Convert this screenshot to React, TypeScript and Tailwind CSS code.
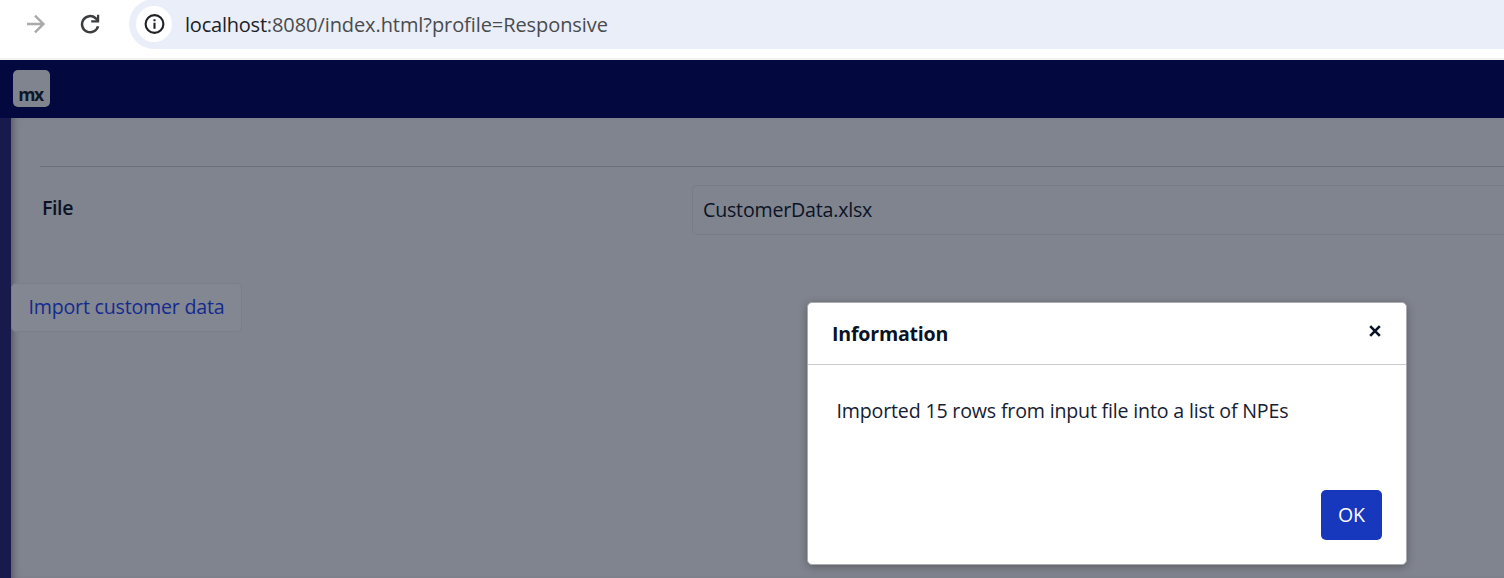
import React from "react";

function BrowserBar() {
  return (
    <div className="flex h-[60px] shrink-0 items-start border-b-2 border-[#f3f3f1] bg-white">
      <div className="flex h-12 w-[129px] shrink-0 items-center pl-[26px]">
        <svg width="20" height="20" viewBox="0 0 20 20" fill="none" stroke="#a9a9a9" strokeWidth="2.4">
          <path d="M1 10H17.3M9 1.6L17.4 10L9 18.4" />
        </svg>
        <svg className="ml-[34px]" width="20" height="20" viewBox="0 0 20 20" fill="none" stroke="#3c3d3f" strokeWidth="2.5">
          <path d="M18 12.2A8.1 8.1 0 1 1 15.6 4.2L17.8 6.4" />
          <path d="M18.1 0.8V7.3H11.2" strokeWidth="2.2" />
        </svg>
      </div>
      <div className="-mt-[1px] flex h-[50px] flex-1 items-center rounded-l-full bg-[#e9eef8] pl-[7px]">
        <div className="flex h-9 w-9 shrink-0 items-center justify-center rounded-full bg-white">
          <svg className="ml-px" width="21" height="20" viewBox="0 0 21 20" fill="none" stroke="#202124" strokeWidth="2.1">
            <circle cx="10.5" cy="10" r="8.9" />
            <path d="M10.5 8.7V14.7M10.5 5.2V7.2" />
          </svg>
        </div>
        <div className="ml-[13px] mt-px whitespace-nowrap font-['Open_Sans',sans-serif] text-[20px] leading-7 tracking-[-0.08px] text-[#4a4b4e]">
          <span className="tracking-[-0.22px] text-[#202124]">localhost</span>:8080/index.html?profile=Responsive
        </div>
      </div>
    </div>
  );
}

function InformationDialog() {
  return (
    <div
      role="dialog"
      className="absolute left-[807px] top-[302px] flex h-[263px] w-[600px] flex-col rounded-[5px] border border-[#a9abb0] bg-white shadow-[0_2px_8px_rgba(0,0,0,0.3)]"
    >
      <div className="flex h-[62px] shrink-0 items-center justify-between border-b border-[#c9cbce] pl-6 pr-[25px]">
        <h4 className="mt-px text-[19.6px] font-bold leading-7 tracking-[-0.22px] text-[#0a1325]">Information</h4>
        <button aria-label="Close" className="-mt-[6px]">
          <svg width="12" height="12" viewBox="0 0 12 12" stroke="#0a1325" strokeWidth="2.6">
            <path d="M1.2 1.2L10.8 10.8M10.8 1.2L1.2 10.8" />
          </svg>
        </button>
      </div>
      <p className="mt-8 whitespace-nowrap pl-[28.5px] text-[19.6px] leading-7 tracking-[-0.175px] text-[#162033]">
        Imported 15 rows from input file into a list of NPEs
      </p>
      <div className="mb-6 mr-6 mt-auto flex justify-end">
        <button className="h-[50px] w-[61px] rounded-[5px] bg-[#1737bd] text-[19.6px] text-white">OK</button>
      </div>
    </div>
  );
}

export default function App() {
  return (
    <div className="relative flex h-[578px] w-[1504px] flex-col overflow-hidden font-['Open_Sans',sans-serif]">
      <BrowserBar />
      <header className="flex h-[58px] shrink-0 bg-[#03083f] pl-[13px] pt-[10px]">
        <div className="flex h-[37px] w-[37px] items-end justify-center rounded-[5px] bg-[#80848f] pb-[3px] pr-[2px] text-[17.5px] font-bold leading-5 tracking-[-1.4px] text-[#0d172b]">
          mx
        </div>
      </header>
      <div className="flex min-h-0 flex-1">
        <aside className="w-[11px] shrink-0 bg-[#171a4a]" />
        <main className="flex min-w-0 flex-1 flex-col items-stretch bg-[#80848e] shadow-[inset_7px_0_7px_-5px_rgba(0,0,0,0.35)]">
          <div className="ml-[29px] mt-12 h-px bg-[#6b6f7d]" />
          <div className="mt-[18px] flex h-[50px] pl-[31px]">
            <label className="w-[650px] shrink-0 pt-[9px] text-[19.6px] font-semibold leading-7 tracking-[-0.4px] text-[#0a1325]">File</label>
            <div className="flex flex-1 items-center rounded-l-[5px] border border-r-0 border-[#787c87] pl-[10px] text-[19.6px] tracking-[-0.2px] text-[#0a1325]">
              CustomerData.xlsx
            </div>
          </div>
          <button className="mt-12 h-[49px] w-[231px] rounded-[5px] border border-[#7a7e88] bg-[#838791] pb-[2px] text-[19.6px] tracking-[-0.2px] text-[#132a8f]">
            Import customer data
          </button>
        </main>
      </div>
      <InformationDialog />
    </div>
  );
}
